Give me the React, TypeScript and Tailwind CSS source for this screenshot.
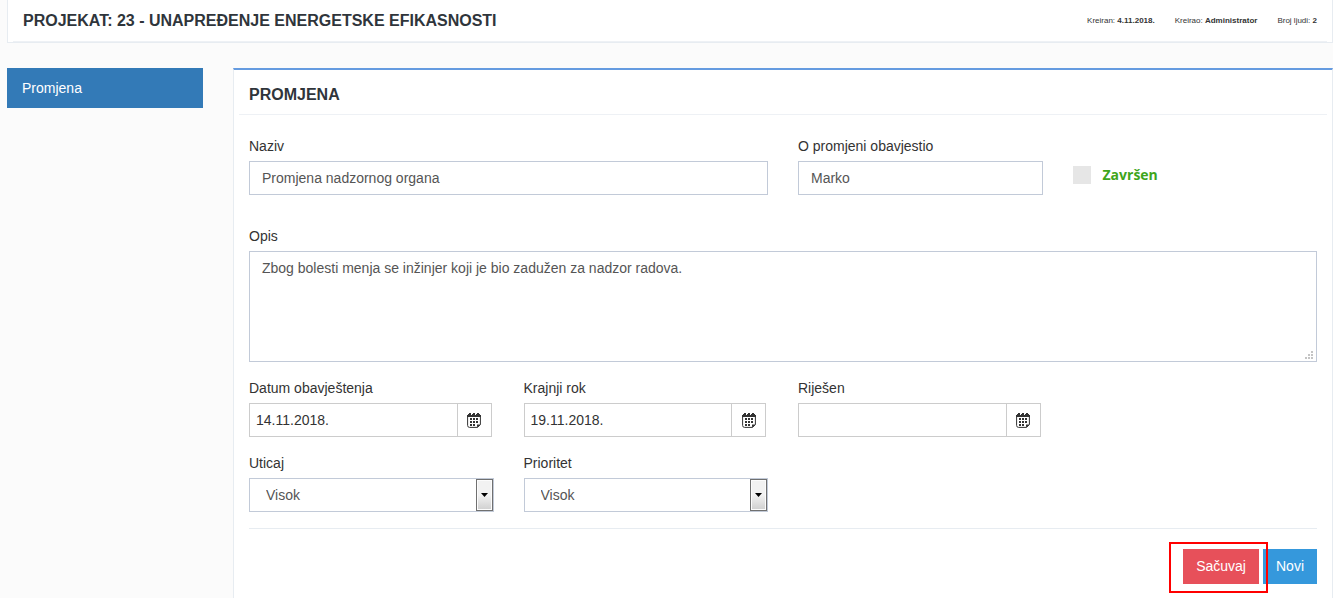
import type { ReactNode } from 'react';

const META = [
  { label: 'Kreiran:', value: '4.11.2018.' },
  { label: 'Kreirao:', value: 'Administrator' },
  { label: 'Broj ljudi:', value: '2' },
];

const LEVELS = ['Visok', 'Srednji', 'Nizak'];

const CONTROL = 'block w-full border border-[#c2cad8] bg-white px-3 text-sm text-[#555555] outline-none';

function Field({ id, label, className = '', children }: {
  id: string;
  label: string;
  className?: string;
  children: ReactNode;
}) {
  return (
    <div className={className}>
      <label htmlFor={id} className="mb-[5px] block text-sm text-[#333333]">
        {label}
      </label>
      {children}
    </div>
  );
}

function CalendarIcon() {
  return (
    <svg width="14" height="15" viewBox="0 0 14 15" aria-hidden="true">
      <path fill="none" stroke="#333333" d="M.6 3v9.4q0 2 2 2h7.9l2.9-2.7V3" />
      <path fill="#333333" d="M10 14.5v-2.9h3.5z" />
      <g shapeRendering="crispEdges">
        <path fill="#333333" d="M1 1h12v1h1v2H0V2h1zM2 0h2v1H2zM6 0h2v1H6zM10 0h2v1h-2z" />
        <path fill="#ffffff" d="M4 1h1v1H4zM8 1h1v1H8z" />
        <path
          fill="#333333"
          d="M3 5h2v2H3zM6 5h2v2H6zM9 5h2v2H9zM3 8h2v2H3zM6 8h2v2H6zM9 8h2v2H9zM3 11h2v2H3zM6 11h2v2H6z"
        />
      </g>
    </svg>
  );
}

function DateField({ id, label, value }: { id: string; label: string; value: string }) {
  return (
    <Field id={id} label={label}>
      <div className="mr-[2px] flex h-[34px] border border-[#cccccc] bg-white">
        <input
          id={id}
          type="text"
          defaultValue={value}
          className="min-w-0 flex-1 px-1.5 text-sm text-[#333333] outline-none"
        />
        <button
          type="button"
          aria-label={`${label} kalendar`}
          className="flex w-[34px] items-center justify-center border-l border-[#cccccc]"
        >
          <CalendarIcon />
        </button>
      </div>
    </Field>
  );
}

function SelectField({ id, label }: { id: string; label: string }) {
  return (
    <Field id={id} label={label}>
      <div className="relative">
        <select
          id={id}
          defaultValue="Visok"
          className="block h-[34px] w-full appearance-none border border-[#c2cad8] bg-white px-4 text-sm text-[#555555] outline-none"
        >
          {LEVELS.map(level => (
            <option key={level}>{level}</option>
          ))}
        </select>
        <span className="pointer-events-none absolute inset-y-px right-px flex w-[17px] items-center justify-center border border-[#707070] bg-linear-to-b from-[#f2f2f2] from-50% to-[#cfcfcf] shadow-[inset_0_0_0_1px_#fcfcfc]">
          <svg width="7" height="4" viewBox="0 0 7 4" aria-hidden="true">
            <path fill="#000000" d="M0 0h7L3.5 4z" />
          </svg>
        </span>
      </div>
    </Field>
  );
}

export default function App() {
  return (
    <div className="flex min-h-screen flex-col bg-[#fbfbfb] pl-[7px] font-['Liberation_Sans',Arial,sans-serif] text-[#333333]">
      <header className="border-x border-b border-[#e7ecf1] bg-white px-[5px]">
        <div className="flex h-[42px] items-center justify-between border-b border-[#eef1f5] px-[10px]">
          <h1 className="text-base font-bold text-[#2f353b]">
            PROJEKAT: 23 - UNAPREĐENJE ENERGETSKE EFIKASNOSTI
          </h1>
          <ul className="flex gap-5 text-[8px]">
            {META.map(({ label, value }) => (
              <li key={label}>
                {label} <b>{value}</b>
              </li>
            ))}
          </ul>
        </div>
      </header>

      <div className="mt-[25px] flex flex-1 gap-[30px]">
        <nav className="w-[196px] shrink-0">
          <a href="#promjena" className="flex h-10 items-center bg-[#337ab7] px-[15px] text-sm text-white">
            Promjena
          </a>
        </nav>

        <main
          id="promjena"
          className="min-w-0 flex-1 border-x border-t-2 border-x-[#e7ecf1] border-t-[#659be0] bg-white px-[5px]"
        >
          <div className="border-b border-[#eef1f5] px-[10px] pt-[13px] pb-[7px]">
            <h2 className="text-base font-bold text-[#2f353b]">PROMJENA</h2>
          </div>

          <form className="px-[10px] pt-[21px]">
            <div className="grid grid-cols-4 gap-x-[30px]">
              <Field id="naziv" label="Naziv" className="col-span-2">
                <input id="naziv" type="text" defaultValue="Promjena nadzornog organa" className={`${CONTROL} h-[34px]`} />
              </Field>
              <Field id="obavjestio" label="O promjeni obavjestio">
                <input id="obavjestio" type="text" defaultValue="Marko" className={`${CONTROL} h-[34px]`} />
              </Field>
              <label className="flex items-center gap-3 self-start pt-[29px] font-['Open_Sans',sans-serif] text-sm font-bold text-[#3ea51b]">
                <input type="checkbox" className="size-[18px] appearance-none bg-[#e6e6e6] checked:bg-[#3ea51b]" />
                Završen
              </label>
            </div>

            <Field id="opis" label="Opis" className="mt-[31px]">
              <div className="relative">
                <textarea
                  id="opis"
                  defaultValue="Zbog bolesti menja se inžinjer koji je bio zadužen za nadzor radova."
                  className={`${CONTROL} h-[111px] resize-none py-1.5`}
                />
                <svg
                  className="pointer-events-none absolute right-[3px] bottom-[2px]"
                  width="9"
                  height="9"
                  viewBox="0 0 9 9"
                  shapeRendering="crispEdges"
                  aria-hidden="true"
                >
                  <path fill="#c4c4c4" d="M6 0h2v2H6zM3 3h2v2H3zM6 3h2v2H6zM0 6h2v2H0zM3 6h2v2H3zM6 6h2v2H6z" />
                </svg>
              </div>
            </Field>

            <div className="mt-4 grid grid-cols-4 gap-x-[30px] gap-y-4">
              <DateField id="datum" label="Datum obavještenja" value="14.11.2018." />
              <DateField id="rok" label="Krajnji rok" value="19.11.2018." />
              <DateField id="rijesen" label="Riješen" value="" />
              <div />
              <SelectField id="uticaj" label="Uticaj" />
              <SelectField id="prioritet" label="Prioritet" />
            </div>

            <div className="mt-4 flex justify-end gap-1 border-t border-[#e7ecf1] pt-5">
              <div className="relative">
                <button type="button" className="h-[35px] bg-[#e7505a] px-[13px] pb-0.5 text-sm text-white">
                  Sačuvaj
                </button>
                <span className="pointer-events-none absolute -top-[7px] -right-[9px] -bottom-[9px] -left-[14px] z-10 border-2 border-[#ff0000]" />
              </div>
              <button type="button" className="h-[35px] bg-[#3598dc] px-[13px] pb-0.5 text-sm text-white">
                Novi
              </button>
            </div>
          </form>
        </main>
      </div>
    </div>
  );
}
